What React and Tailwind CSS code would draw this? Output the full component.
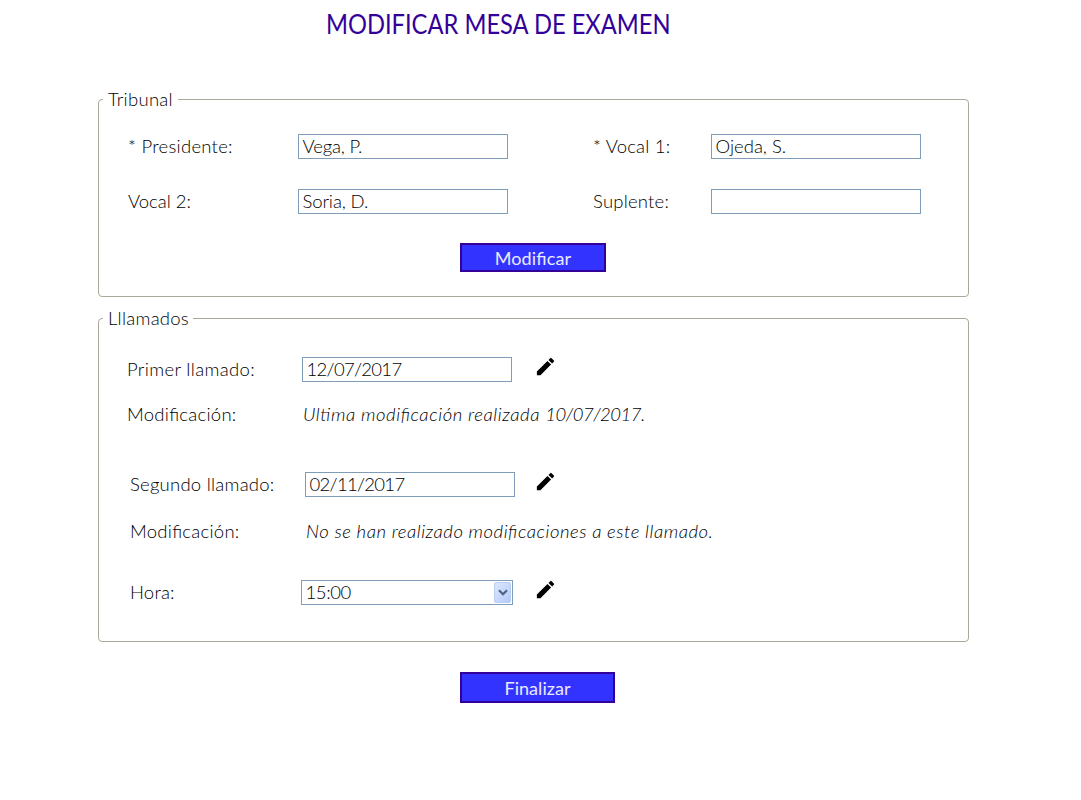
import { MdEdit } from "react-icons/md";

function Label({ className = "", children }) {
  return <span className={`shrink-0 whitespace-nowrap ${className}`}>{children}</span>;
}

function Field({ className = "", children }) {
  return (
    <div className={`flex h-[25px] w-[210px] shrink-0 items-center border border-[#7f9db9] bg-white pl-[3.5px] ${className}`}>
      <span className="whitespace-nowrap">{children}</span>
    </div>
  );
}

function Group({ title, className = "", legendClass = "", children }) {
  return (
    <fieldset className={`ml-[98px] w-[871px] rounded-[4px] border border-[#aca899] ${className}`}>
      <legend className={`ml-[4px] h-[27px] whitespace-nowrap pl-[5px] leading-[27px] ${legendClass}`}>{title}</legend>
      {children}
    </fieldset>
  );
}

function Button({ className = "", children }) {
  return (
    <button className={`block border-2 border-[#330099] bg-[#3333ff] text-center text-[18px] font-normal text-white/90 ${className}`}>{children}</button>
  );
}

function Pencil({ className = "" }) {
  return <MdEdit className={`size-[23px] shrink-0 text-black ${className}`} />;
}

export default function App() {
  return (
    <main className="h-[800px] w-[1081px] overflow-hidden bg-white font-['Lato',sans-serif] text-[18.5px] font-light text-black [font-feature-settings:'liga']">
      <h1 className="ml-[326px] h-[86px] w-[378px] origin-left scale-x-[.911] whitespace-nowrap pt-[8px] text-[26px] font-normal leading-[32px] text-[#330099]">
        MODIFICAR MESA DE EXAMEN
      </h1>

      <Group title="Tribunal" className="h-[211px]" legendClass="w-[75px] tracking-[.28px]">
        <div className="mt-[21px] flex h-[25px] items-center pl-[29px]">
          <Label className="w-[170px] tracking-[.27px]">* Presidente:</Label>
          <Field className="tracking-[-.15px]">Vega, P.</Field>
          <Label className="ml-[85px] w-[118px] tracking-[.2px]">* Vocal 1:</Label>
          <Field className="tracking-[0px]">Ojeda, S.</Field>
        </div>
        <div className="mt-[30px] flex h-[25px] items-center pl-[29px]">
          <Label className="w-[170px] tracking-[-.02px]">Vocal 2:</Label>
          <Field className="tracking-[-.1px]">Soria, D.</Field>
          <Label className="ml-[85px] w-[118px] tracking-[.2px]">Suplente:</Label>
          <Field />
        </div>
        <Button className="ml-[361px] mt-[29px] h-[29px] w-[146px] leading-[26px] tracking-[.15px]">Modificar</Button>
      </Group>

      <Group title="Lllamados" className="mt-[8px] h-[337px]" legendClass="w-[90px] tracking-[.25px]">
        <div className="mt-[25px] flex h-[25px] items-center pl-[28px]">
          <Label className="w-[175px] tracking-[.35px]">Primer llamado:</Label>
          <Field className="tracking-[-.7px]">12/07/2017</Field>
          <Pencil className="-mt-[7px] ml-[22px]" />
        </div>
        <div className="mt-[20px] flex h-[25px] items-center pl-[28px]">
          <Label className="w-[176px] tracking-[.25px]">Modificación:</Label>
          <Label className="italic tracking-[.58px]">
            Ultima modificación realizada <span className="tracking-[-.5px]">10/07/2017.</span>
          </Label>
        </div>
        <div className="mt-[45px] flex h-[25px] items-center pl-[31px]">
          <Label className="w-[175px] tracking-[.24px]">Segundo llamado:</Label>
          <Field className="tracking-[-.7px]">02/11/2017</Field>
          <Pencil className="-mt-[7px] ml-[19px]" />
        </div>
        <div className="mt-[22px] flex h-[25px] items-center pl-[31px]">
          <Label className="w-[176px] tracking-[.25px]">Modificación:</Label>
          <Label className="italic tracking-[.53px]">No se han realizado modificaciones a este llamado.</Label>
        </div>
        <div className="mt-[36px] flex h-[25px] items-center pl-[31px]">
          <Label className="w-[171px] tracking-[.2px]">Hora:</Label>
          <div className="flex h-[25px] w-[212px] shrink-0 items-center justify-between border border-[#7f9db9] bg-white pl-[3.5px] pr-[1px]">
            <span className="tracking-[-.4px]">15:00</span>
            <span className="flex h-[21px] w-[17px] items-center justify-center rounded-[2px] border border-[#bccdf4] bg-linear-to-br from-[#dbe6fe] to-[#b4cbf9]">
              <svg className="h-[7px] w-[10px]" viewBox="0 0 10 7" fill="none" stroke="#4d6185" strokeWidth="2.2">
                <path d="M1 1.2 5 5.2 9 1.2" />
              </svg>
            </span>
          </div>
          <Pencil className="-mt-[7px] ml-[21px]" />
        </div>
      </Group>

      <Button className="ml-[460px] mt-[30px] h-[31px] w-[155px] leading-[29px] tracking-[.05px]">Finalizar</Button>
    </main>
  );
}
